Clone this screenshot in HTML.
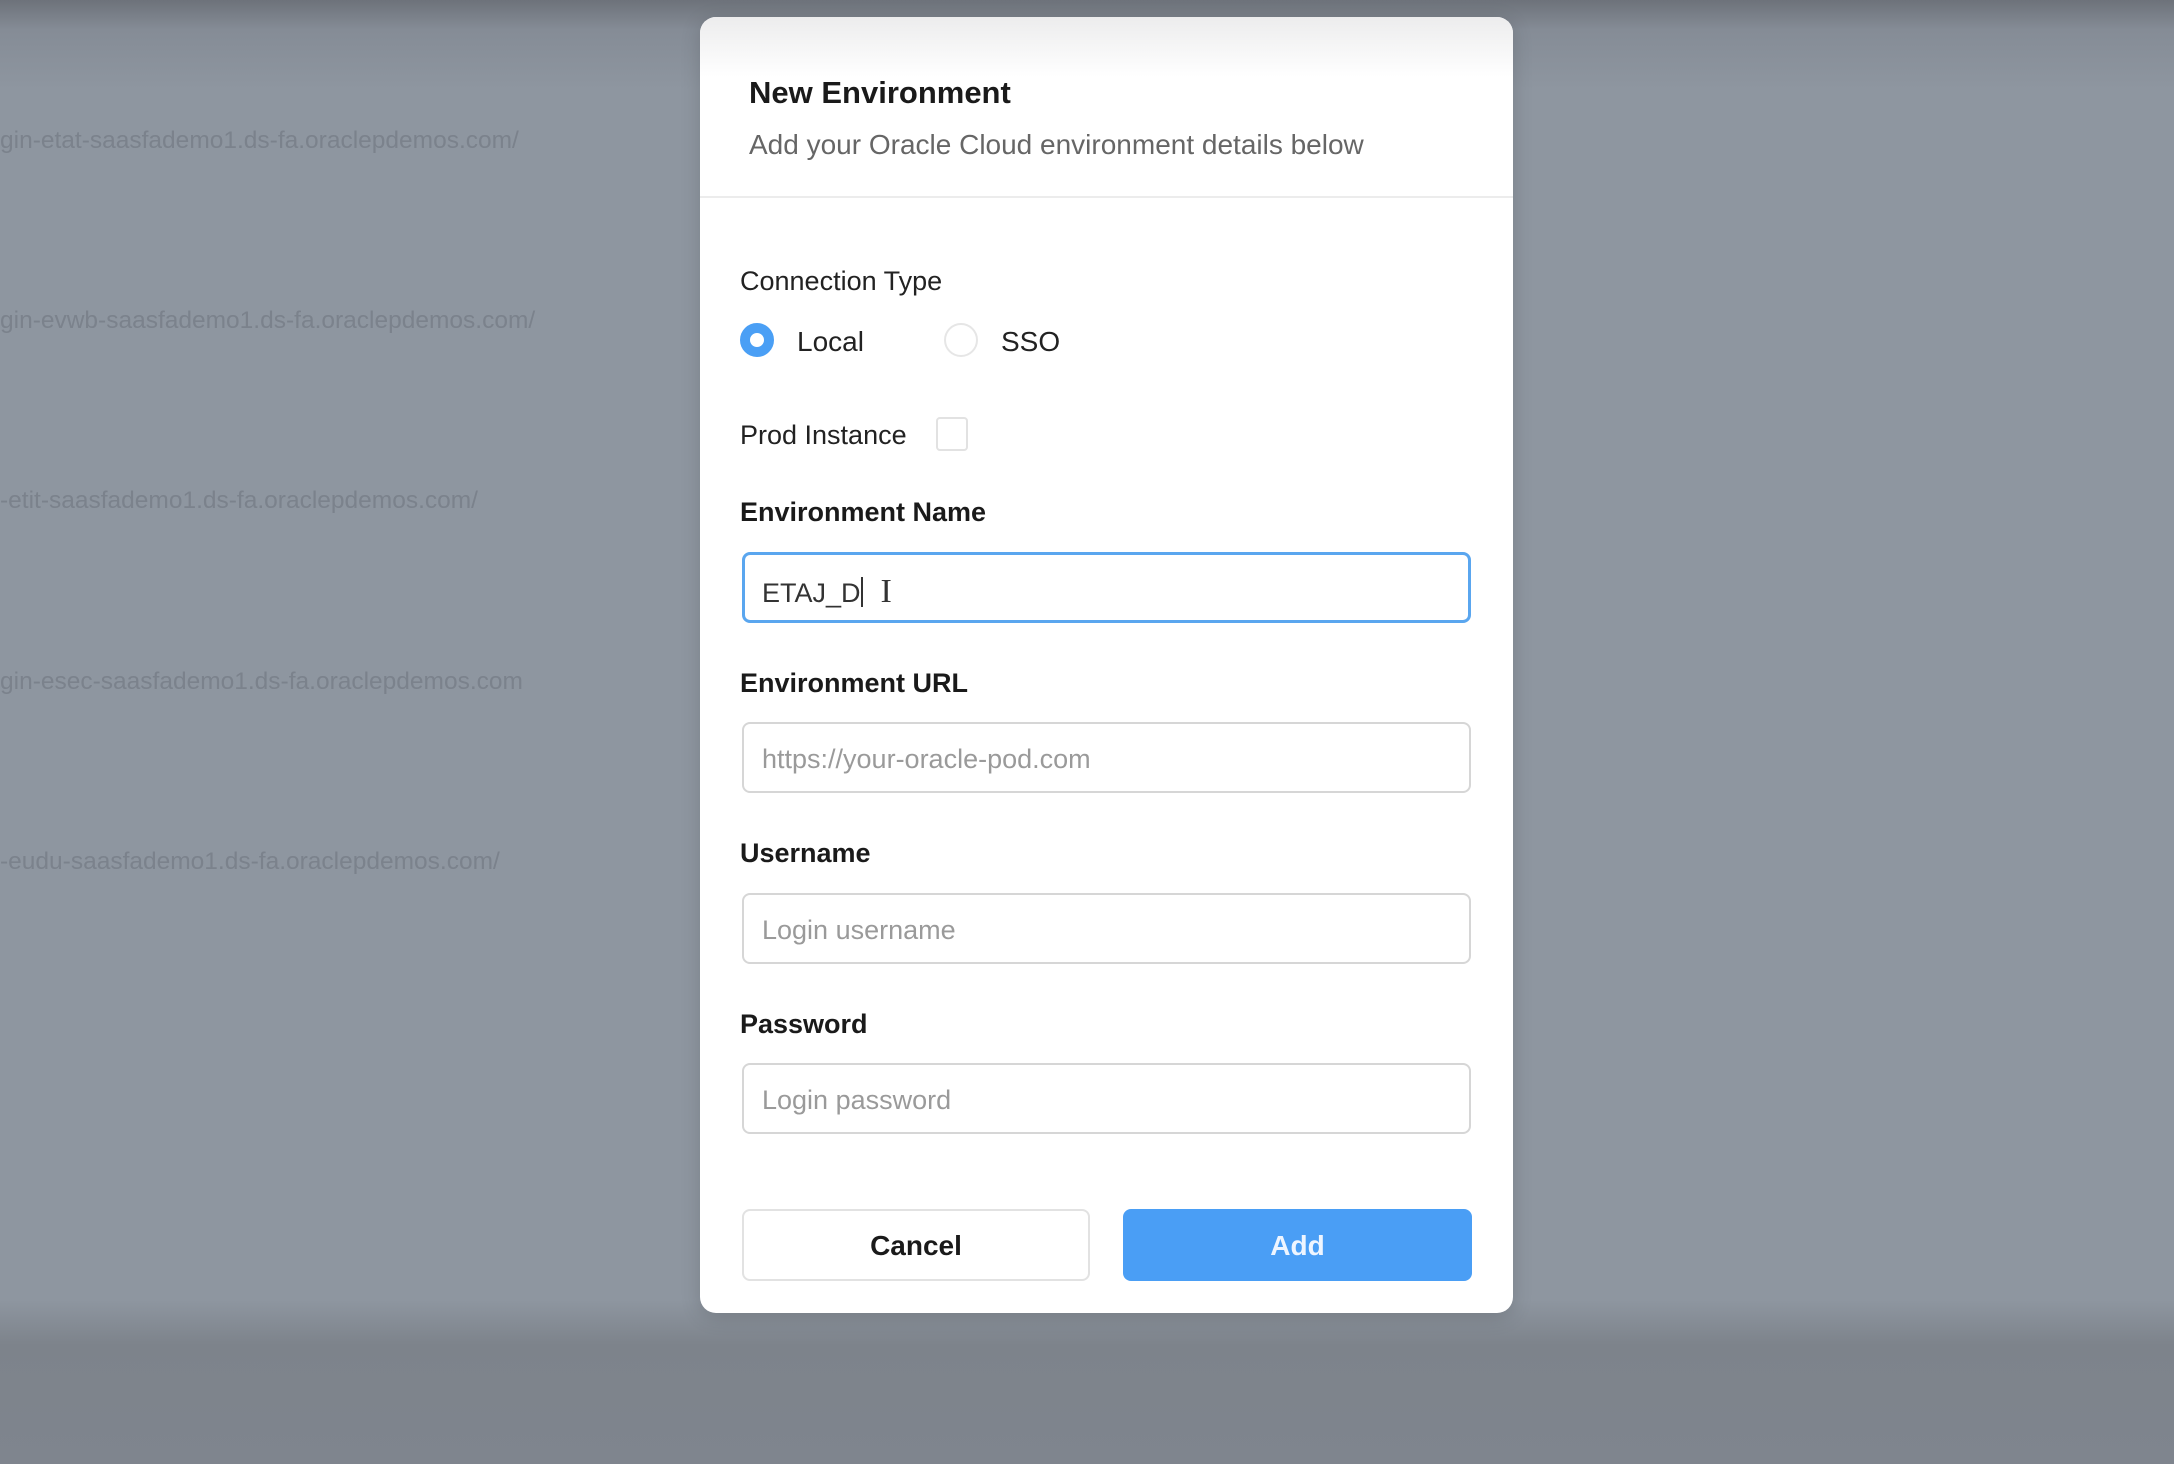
<!DOCTYPE html>
<html><head><meta charset="utf-8"><style>
*{box-sizing:border-box;margin:0;padding:0}
html,body{width:2174px;height:1464px;overflow:hidden}
body{font-family:"Liberation Sans",sans-serif;position:relative;
background:linear-gradient(180deg,#6d727a 0px,#858c96 30px,#8e96a0 90px,#8e96a0 1300px,#7d838b 1345px,#7f858e 1464px);}
.bg{position:absolute;left:0;font-size:24.5px;color:#7b828c;white-space:nowrap}
.modal{position:absolute;left:700px;top:17px;width:813px;height:1296px;background:#fff;border-radius:16px;
box-shadow:0 4px 20px rgba(0,0,0,.15);overflow:hidden}
.top{position:absolute;left:0;top:0;width:100%;height:60px;background:linear-gradient(#ececed,#fff)}
.t{position:absolute;white-space:nowrap}
.title{left:49px;top:58px;font-size:31px;font-weight:bold;color:#1a1a1a}
.sub{left:49px;top:112px;font-size:28px;color:#666}
.div{position:absolute;left:0;top:179px;width:100%;height:2px;background:#ececec}
.lbl{font-size:27px;color:#222}
.b{font-weight:bold;color:#1a1a1a}
.inp{position:absolute;left:42px;width:729px;height:71px;border:2px solid #d6d6d6;border-radius:8px;font-size:27px;color:#9a9a9a;padding:20px 0 0 18px}
.btn{position:absolute;top:1192px;height:72px;border-radius:8px;font-size:28px;font-weight:bold;text-align:center;line-height:72px}
</style></head><body>
<div class="bg" style="top:127px">gin-etat-saasfademo1.ds-fa.oraclepdemos.com/</div>
<div class="bg" style="top:307px">gin-evwb-saasfademo1.ds-fa.oraclepdemos.com/</div>
<div class="bg" style="top:487px">-etit-saasfademo1.ds-fa.oraclepdemos.com/</div>
<div class="bg" style="top:668px">gin-esec-saasfademo1.ds-fa.oraclepdemos.com</div>
<div class="bg" style="top:848px">-eudu-saasfademo1.ds-fa.oraclepdemos.com/</div>
<div class="modal">
<div class="top"></div>
<div class="t title">New Environment</div>
<div class="t sub">Add your Oracle Cloud environment details below</div>
<div class="div"></div>
<div class="t lbl" style="left:40px;top:249px">Connection Type</div>
<div style="position:absolute;left:40px;top:306px;width:34px;height:34px;border-radius:50%;border:10px solid #4a9ff5;background:#fff"></div>
<div class="t lbl" style="left:97px;top:309px;font-size:28px">Local</div>
<div style="position:absolute;left:244px;top:306px;width:34px;height:34px;border-radius:50%;border:2px solid #e6e6e6"></div>
<div class="t lbl" style="left:301px;top:309px;font-size:28px">SSO</div>
<div class="t lbl" style="left:40px;top:403px">Prod Instance</div>
<div style="position:absolute;left:236px;top:400px;width:32px;height:34px;border:2px solid #e2e2e2;border-radius:4px"></div>
<div class="t lbl b" style="left:40px;top:480px">Environment Name</div>
<div class="inp" style="top:535px;border:3px solid #5aa6ef;color:#333;padding-left:17px;padding-top:18px">ETAJ_D<span style="display:inline-block;width:2px;height:30px;background:#333;vertical-align:-5px"></span><span style="color:#333;margin-left:18px;font-family:'Liberation Serif',serif;font-size:34px">I</span></div>
<div class="t lbl b" style="left:40px;top:651px">Environment URL</div>
<div class="inp" style="top:705px">https://your-oracle-pod.com</div>
<div class="t lbl b" style="left:40px;top:821px">Username</div>
<div class="inp" style="top:876px">Login username</div>
<div class="t lbl b" style="left:40px;top:992px">Password</div>
<div class="inp" style="top:1046px">Login password</div>
<div class="btn" style="left:42px;width:348px;border:2px solid #e2e2e2;color:#1a1a1a;background:#fff;line-height:70px">Cancel</div>
<div class="btn" style="left:423px;width:349px;background:#4a9ef5;color:#eef5ff;line-height:74px">Add</div>
</div>
</body></html>
